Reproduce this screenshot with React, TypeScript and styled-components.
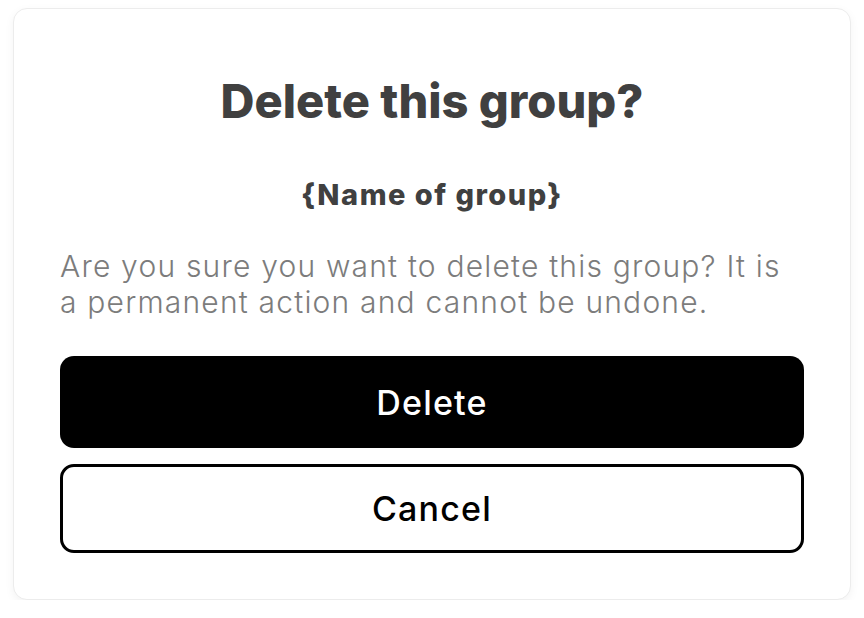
import React from 'react';
import styled, { createGlobalStyle } from 'styled-components';

const GlobalStyle = createGlobalStyle`
  html, body {
    margin: 0;
    padding: 0;
    background: #ffffff;
  }
  body {
    font-family: 'Inter', 'Open Sans', sans-serif;
  }
`;

const Page = styled.div`
  padding: 8px 13px 0 13px;
  width: 864px;
  box-sizing: border-box;
`;

const Card = styled.div`
  box-sizing: border-box;
  width: 838px;
  height: 592px;
  border: 1px solid #ececec;
  border-radius: 14px;
  box-shadow: 0 3px 10px rgba(0, 0, 0, 0.05);
  background: #ffffff;
  padding: 0 46px;
  display: flex;
  flex-direction: column;
`;

const Title = styled.h1`
  margin: 68px 0 0 0;
  font-family: 'Inter', sans-serif;
  font-weight: 800;
  font-size: 47px;
  line-height: 48px;
  color: #404040;
  text-align: center;
`;

const GroupName = styled.h2`
  margin: 55px 0 0 0;
  font-family: 'Inter', sans-serif;
  font-weight: 800;
  font-size: 29px;
  line-height: 30px;
  letter-spacing: 1.5px;
  color: #404040;
  text-align: center;
`;

const Message = styled.p`
  margin: 38px 0 0 0;
  font-family: 'Inter', sans-serif;
  font-weight: 300;
  font-size: 30px;
  line-height: 36px;
  letter-spacing: 1.2px;
  color: #7c7c7c;
`;

const Actions = styled.div`
  margin-top: 36px;
  display: flex;
  flex-direction: column;
  gap: 16px;
`;

const Button = styled.button<{ $primary?: boolean }>`
  box-sizing: border-box;
  width: 100%;
  height: ${(p) => (p.$primary ? '92px' : '89px')};
  border-radius: 14px;
  border: ${(p) => (p.$primary ? 'none' : '3px solid #000000')};
  background: ${(p) => (p.$primary ? '#000000' : '#ffffff')};
  color: ${(p) => (p.$primary ? '#ffffff' : '#000000')};
  font-family: 'Inter', sans-serif;
  font-weight: 500;
  font-size: 34px;
  letter-spacing: 1.2px;
  cursor: pointer;
`;

export default function App() {
  return (
    <Page>
      <GlobalStyle />
      <Card>
        <Title>Delete this group?</Title>
        <GroupName>{'{Name of group}'}</GroupName>
        <Message>
          Are you sure you want to delete this group? It is a permanent action and cannot be undone.
        </Message>
        <Actions>
          <Button $primary>Delete</Button>
          <Button>Cancel</Button>
        </Actions>
      </Card>
    </Page>
  );
}
